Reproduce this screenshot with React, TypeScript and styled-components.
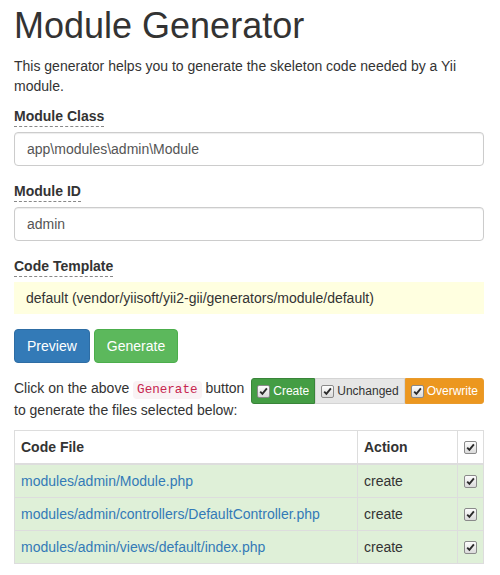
import React from "react";
import styled, { createGlobalStyle } from "styled-components";

const GlobalStyle = createGlobalStyle`
  body {
    margin: 0;
    background: #fff;
    font-family: "Liberation Sans", Arial, sans-serif;
    font-size: 14px;
    line-height: 20px;
    color: #333;
  }
`;

const Page = styled.div`
  width: 470px;
  padding: 0 16px 0 14px;
`;

const Title = styled.h1`
  margin: 6px 0 10px;
  font-size: 36px;
  font-weight: 500;
  line-height: 39.6px;
  color: #333;
`;

const Intro = styled.p`
  margin: 0 0 10px;
`;

const FormGroup = styled.div`
  margin-bottom: 15px;
`;

const Label = styled.label`
  display: inline-block;
  margin-bottom: 5px;
  font-weight: 700;
  border-bottom: 1px dashed #888;
`;

const Input = styled.input`
  display: block;
  box-sizing: border-box;
  width: 100%;
  height: 34px;
  padding: 6px 12px;
  font-family: inherit;
  font-size: 14px;
  color: #555;
  background: #fff;
  border: 1px solid #ccc;
  border-radius: 4px;
  box-shadow: inset 0 1px 1px rgba(0, 0, 0, 0.075);
  outline: none;
`;

const StickyValue = styled.div`
  padding: 6px 12px;
  background: #ffffe0;
`;

const Buttons = styled.div`
  display: flex;
  gap: 4px;
  margin-bottom: 15px;
`;

const Button = styled.button<{ $variant: "primary" | "success" }>`
  height: 34px;
  padding: 6px 12px;
  font-family: inherit;
  font-size: 14px;
  line-height: 20px;
  color: #fff;
  border: 1px solid
    ${(p) => (p.$variant === "primary" ? "#2e6da4" : "#4cae4c")};
  background: ${(p) => (p.$variant === "primary" ? "#337ab7" : "#5cb85c")};
  border-radius: 4px;
  cursor: pointer;
`;

const Files = styled.div``;

const Legend = styled.div`
  float: right;
  display: flex;
`;

const LegendItem = styled.label<{ $bg: string; $fg: string; $border: string }>`
  display: flex;
  align-items: center;
  gap: 3px;
  height: 26px;
  box-sizing: border-box;
  padding: 1px 5px 0;
  font-size: 12px;
  color: ${(p) => p.$fg};
  background: ${(p) => p.$bg};
  border: 1px solid ${(p) => p.$border};
  &:first-child {
    border-radius: 3px 0 0 3px;
  }
  &:last-child {
    border-radius: 0 3px 3px 0;
  }
`;

const Note = styled.p`
  margin: 0 0 10px;
`;

const Code = styled.code`
  padding: 2px 4px;
  font-family: "Liberation Mono", "Courier New", monospace;
  font-size: 12.6px;
  color: #c7254e;
  background: #f9f2f4;
  border-radius: 4px;
`;

const Table = styled.table`
  clear: both;
  width: 100%;
  border-collapse: collapse;
  border: 1px solid #ddd;
`;

const Th = styled.th<{ $w?: number; $center?: boolean }>`
  padding: 6px;
  text-align: ${(p) => (p.$center ? "center" : "left")};
  width: ${(p) => (p.$w ? `${p.$w}px` : "auto")};
  box-sizing: border-box;
  font-weight: 700;
  border: 1px solid #ddd;
  border-bottom-width: 2px;
  vertical-align: middle;
`;

const Row = styled.tr`
  background: #dff0d8;
`;

const Td = styled.td<{ $center?: boolean }>`
  padding: 6px;
  border: 1px solid #ddd;
  text-align: ${(p) => (p.$center ? "center" : "left")};
  vertical-align: middle;
`;

const FileLink = styled.a`
  color: #337ab7;
  text-decoration: none;
`;

const Box = styled.span`
  display: inline-flex;
  align-items: center;
  justify-content: center;
  flex: none;
  width: 13px;
  height: 13px;
  box-sizing: border-box;
  border: 1px solid #8a8a8a;
  border-radius: 2px;
  background: linear-gradient(#fdfdfd, #dadada);
  vertical-align: middle;
`;

const Check = () => (
  <Box>
    <svg width="9" height="9" viewBox="0 0 9 9">
      <path
        d="M1.2 4.6 L3.4 6.9 L7.9 1.3"
        fill="none"
        stroke="#2b2b2b"
        strokeWidth="1.9"
      />
    </svg>
  </Box>
);

const files = [
  "modules/admin/Module.php",
  "modules/admin/controllers/DefaultController.php",
  "modules/admin/views/default/index.php",
];

export default function App() {
  return (
    <Page>
      <GlobalStyle />
      <Title>Module Generator</Title>
      <Intro>
        This generator helps you to generate the skeleton code needed by a Yii
        module.
      </Intro>

      <FormGroup>
        <Label>Module Class</Label>
        <Input defaultValue="app\modules\admin\Module" />
      </FormGroup>

      <FormGroup>
        <Label>Module ID</Label>
        <Input defaultValue="admin" />
      </FormGroup>

      <FormGroup>
        <Label>Code Template</Label>
        <StickyValue>default (vendor/yiisoft/yii2-gii/generators/module/default)</StickyValue>
      </FormGroup>

      <Buttons>
        <Button $variant="primary">Preview</Button>
        <Button $variant="success">Generate</Button>
      </Buttons>

      <Files>
        <Legend>
          <LegendItem $bg="#449d44" $fg="#fff" $border="#398439">
            <Check /> Create
          </LegendItem>
          <LegendItem $bg="#e6e6e6" $fg="#333" $border="#d4d4d4">
            <Check /> Unchanged
          </LegendItem>
          <LegendItem $bg="#ec971f" $fg="#fff" $border="#e89a2c">
            <Check /> Overwrite
          </LegendItem>
        </Legend>
        <Note>
          Click on the above <Code>Generate</Code> button to generate the files
          selected below:
        </Note>

        <Table>
          <thead>
            <tr>
              <Th>Code File</Th>
              <Th $w={100}>Action</Th>
              <Th $w={26} $center>
                <Check />
              </Th>
            </tr>
          </thead>
          <tbody>
            {files.map((f) => (
              <Row key={f}>
                <Td>
                  <FileLink href="#">{f}</FileLink>
                </Td>
                <Td>create</Td>
                <Td $center>
                  <Check />
                </Td>
              </Row>
            ))}
          </tbody>
        </Table>
      </Files>
    </Page>
  );
}
